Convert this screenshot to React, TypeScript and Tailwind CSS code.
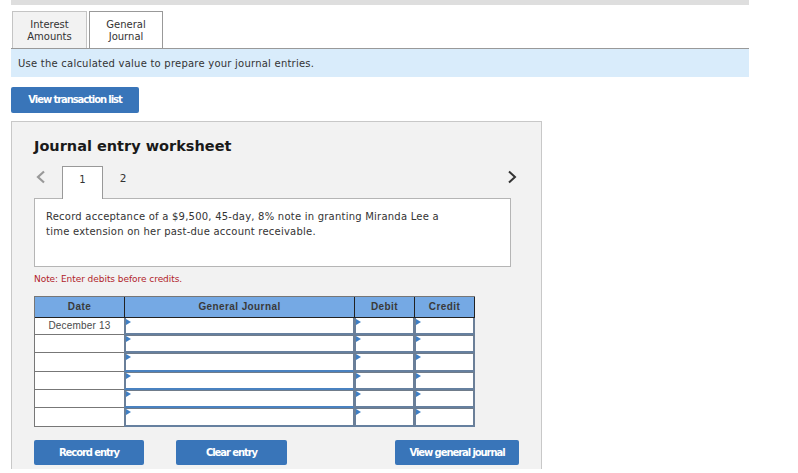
import React from "react";

function Btn({ label, w }: { label: string; w: string }) {
  return (
    <button className={`${w} h-[25px] bg-[#3975b9] rounded-[2px] text-white text-[10px] font-bold tracking-[-1.08px] font-['DejaVu_Sans',sans-serif] flex items-center justify-center pb-[1px]`}>
      {label}
    </button>
  );
}

function Cell({ w, blue, top, last }: { w: string; blue?: boolean; top?: boolean; last?: boolean }) {
  return (
    <div className={`${w} relative h-full ${last ? "border-r-2" : "border-r"} border-r-[#6b7f98] border-b-2 ${blue ? "border-b-[#4a82c0]" : "border-b-[#66809f]"} border-l-2 border-l-[#6a7f99] ${top ? "border-t border-t-[#707c8a]" : ""} bg-white shrink-0`}>
      <svg className={`absolute left-0 ${top ? "top-0" : "top-[1px]"}`} width="5" height="6" viewBox="0 0 5 6">
        <path d="M0 0 L5 3 L0 6 Z" fill="#3f7fc4" />
      </svg>
    </div>
  );
}

function Row({ date, h, blue, top = true }: { date?: string; h: string; blue?: boolean; top?: boolean }) {
  return (
    <div className={`flex ${h}`}>
      <div className="w-[89px] shrink-0 bg-white border-b border-b-[#777] flex items-center justify-center text-[10px] text-[#4a4a4a] font-['Liberation_Sans',sans-serif] tracking-[0.2px] pb-[1px]">
        {date}
      </div>
      <Cell w="w-[230px]" blue={blue} top={top} />
      <Cell w="w-[60px]" top={top} />
      <Cell w="w-[61px]" top={top} last />
    </div>
  );
}

function Head({ w, label }: { w: string; label: string }) {
  return (
    <div className={`${w} shrink-0 h-full flex items-center justify-center text-[10px] font-bold text-[#3a3a3a] tracking-[0.4px] font-['Liberation_Sans',sans-serif] border-r border-r-[#222] pb-[1px]`}>
      {label}
    </div>
  );
}

export default function App() {
  return (
    <div className="w-[798px] h-[473px] bg-white overflow-hidden font-['DejaVu_Sans',Verdana,sans-serif] text-[#333]">
      <div className="w-[738px] ml-[11px] h-[5px] bg-[#dedede]" />
      <div className="ml-[12px] mt-[6px] flex gap-[2px] h-[37px]">
        <div className="w-[75px] bg-[#f2f2f2] border border-[#c4c4c4] border-b-0 text-center text-[10px] leading-[12px] pt-[7px]">
          Interest<br />Amounts
        </div>
        <div className="w-[74px] bg-white border border-[#999] border-b-0 text-center text-[10px] leading-[12px] pt-[7px]">
          General<br />Journal
        </div>
      </div>
      <div className="w-[738px] ml-[11px] h-[29px] bg-[#d9ecfb] border-t border-t-[#999] flex items-center pl-[7px] text-[10px] tracking-[0.23px]">
        Use the calculated value to prepare your journal entries.
      </div>
      <div className="ml-[11px] mt-[10px]">
        <Btn label="View transaction list" w="w-[128px] !h-[26px]" />
      </div>
      <div className="ml-[11px] mt-[8px] w-[531px] h-[348px] bg-[#f2f2f2] border border-[#c8c8c8] border-b-0 pl-[22px] pr-[30px]">
        <div className="mt-[14px] h-[20px] text-[14.5px] leading-[20px] font-bold text-[#1a1a1a]">Journal entry worksheet</div>
        <div className="relative mt-[10px] flex h-[33px] items-stretch">
          <svg className="mt-[4px] ml-[2px]" width="10" height="14" viewBox="0 0 10 14">
            <path d="M8 1.5 L2 7 L8 12.5" fill="none" stroke="#999" strokeWidth="2.2" />
          </svg>
          <div className="ml-[16px] w-[41px] h-[33px] bg-white border border-[#999] border-b-0 flex items-center justify-center text-[10px] z-10 pb-[7px]">1</div>
          <div className="w-[40px] flex items-center justify-center text-[10.5px] pb-[7px]">2</div>
          <svg className="absolute right-[-6px] top-[4px]" width="10" height="14" viewBox="0 0 10 14">
            <path d="M2 1.5 L8 7 L2 12.5" fill="none" stroke="#333" strokeWidth="2" />
          </svg>
        </div>
        <div className="w-[477px] h-[69px] bg-white border border-[#b5b5b5] px-[11px] pt-[10px] text-[10px] leading-[15px] tracking-[0.23px] -mt-[1px]">
          Record acceptance of a $9,500, 45-day, 8% note in granting Miranda Lee a<br />
          time extension on her past-due account receivable.
        </div>
        <div className="mt-[6px] h-[12px] text-[9px] leading-[12px] text-[#b1222a] tracking-[-0.05px]">Note: Enter debits before credits.</div>
        <div className="mt-[11px] w-[441px] border-l border-l-[#777] border-t border-t-[#777] bg-white">
          <div className="flex h-[20px] bg-[#75a9e4] border-b border-b-[#222] box-content">
            <Head w="w-[90px]" label="Date" />
            <Head w="w-[230px]" label="General Journal" />
            <Head w="w-[60px]" label="Debit" />
            <Head w="w-[60px]" label="Credit" />
          </div>
          <Row date="December 13" h="h-[17px]" top={false} />
          <Row h="h-[18px]" />
          <Row h="h-[19px]" blue />
          <Row h="h-[18px]" blue />
          <Row h="h-[18px]" blue />
          <Row h="h-[19px]" />
        </div>
        <div className="mt-[13px] flex w-[485px] justify-between">
          <div className="flex gap-[32px]">
            <Btn label="Record entry" w="w-[110px]" />
            <Btn label="Clear entry" w="w-[111px]" />
          </div>
          <Btn label="View general journal" w="w-[124px]" />
        </div>
      </div>
    </div>
  );
}
